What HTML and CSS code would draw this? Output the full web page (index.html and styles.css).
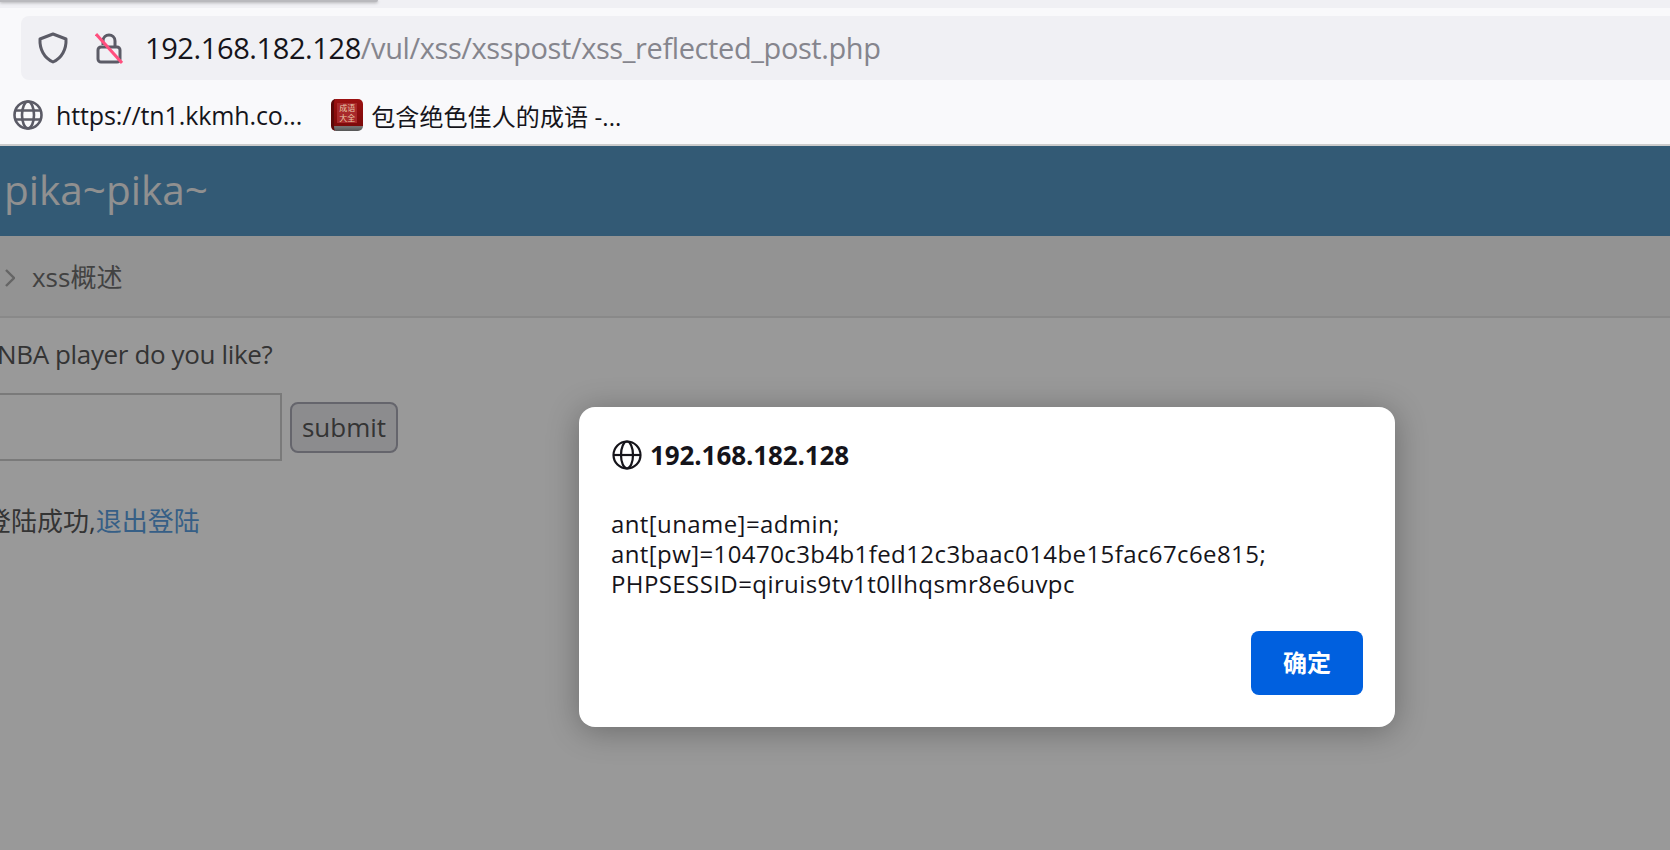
FILE: index.html
```html
<!DOCTYPE html>
<html lang="zh-CN">
<head>
  <meta charset="UTF-8" />
  <title>xss_reflected_post</title>
  <link rel="stylesheet" href="styles.css">
</head>
<body>
  <div class="tabstrip"><div class="tab-edge"></div></div>
  <div class="toolbar">
    <div class="urlbar">
      <svg class="shield" viewBox="0 0 30 32" fill="none" stroke="#5b5b66" stroke-width="3" stroke-linejoin="round">
        <path d="M15 2 L28 7 C28.500 17 24 26 15 30 C6 26 1.500 17 2 7 Z"/>
      </svg>
      <svg class="lock" viewBox="0 0 28 32" fill="none" stroke-width="3">
        <path d="M8 13 V9 C8 1 20 1 20 9 V15" stroke="#5b5b66"/>
        <rect x="3" y="15" width="22" height="15" rx="3" stroke="#5b5b66"/>
        <path d="M1 2 L27 31" stroke="#ff4f7e"/>
      </svg>
      <div class="url"><span class="host">192.168.182.128</span>/vul/xss/xsspost/xss_reflected_post.php</div>
    </div>
    <div class="bookmarks">
      <div class="bookmark">
        <svg class="globe" viewBox="0 0 30 30" fill="none" stroke="#5b5b66" stroke-width="2.600">
          <circle cx="15" cy="15" r="13.500"/>
          <ellipse cx="15" cy="15" rx="6" ry="13.500"/>
          <path d="M2 10.500 H28 M2 19.500 H28"/>
        </svg>
        <span>https://tn1.kkmh.co...</span>
      </div>
      <div class="bookmark bookmark-cn">
        <div class="book"><div class="book-label">成语<br>大全</div></div>
        <span>包含绝色佳人的成语 -...</span>
      </div>
    </div>
  </div>

  <div class="page">
    <div class="navbar">pika~pika~</div>
    <div class="breadcrumb">
      <svg class="chevron" viewBox="0 0 10 18" fill="none" stroke="#a8a8a8" stroke-width="2.400"><path d="M1 1 L9 9 L1 17"/></svg>
      <span>xss概述</span>
    </div>
    <div class="content">
      <p class="question">NBA player do you like?</p>
      <form class="nba-form">
        <input class="nba-input" type="text" />
        <button class="submit" type="button">submit</button>
      </form>
      <p class="login-msg">登陆成功,<a href="#">退出登陆</a></p>
    </div>

    <div class="overlay">
      <div class="dialog">
        <div class="dialog-title">
          <svg class="globe" viewBox="0 0 30 30" fill="none" stroke="#15141a" stroke-width="2.200">
            <circle cx="15" cy="15" r="13.500"/>
            <ellipse cx="15" cy="15" rx="6" ry="13.500"/>
            <path d="M2 15 H28"/>
          </svg>
          <span>192.168.182.128</span>
        </div>
        <div class="dialog-msg">ant[uname]=admin;<br>ant[pw]=10470c3b4b1fed12c3baac014be15fac67c6e815;<br>PHPSESSID=qiruis9tv1t0llhqsmr8e6uvpc</div>
        <div class="dialog-actions">
          <button class="ok" type="button">确定</button>
        </div>
      </div>
    </div>
  </div>
</body>
</html>
```

FILE: styles.css
```css
* {
  box-sizing: border-box;
}
html, body {
  height: 100%;
}
body {
  margin: 0;
  overflow: hidden;
  display: flex;
  flex-direction: column;
  background: #fff;
  font-family: "Open Sans", "Noto Sans CJK SC", sans-serif;
}

/* browser chrome */
.tabstrip {
  height: 8px;
  background: #f0f0f4;
}
.tab-edge {
  width: 378px;
  height: 2px;
  background: #b9b9bd;
  box-shadow: 0 1px 3px rgba(0, 0, 0, 0.3);
  border-bottom-right-radius: 4px;
}
.toolbar {
  background: #f9f9fb;
  border-bottom: 2px solid #ccc;
  height: 138px;
  padding-top: 8px;
}
.urlbar {
  display: flex;
  align-items: center;
  height: 64px;
  margin-left: 21px;
  padding-left: 17px;
  background: #f0f0f4;
  border-radius: 8px 0 0 8px;
}
.shield {
  width: 30px;
  height: 32px;
}
.lock {
  width: 28px;
  height: 32px;
  margin-left: 27px;
}
.url {
  margin: -2px 0 0 22px;
  font-size: 29px;
  letter-spacing: -0.4px;
  color: #85858d;
}
.host {
  color: #15141a;
}
.bookmarks {
  display: flex;
  align-items: center;
  height: 62px;
  padding: 8px 0 0 13px;
  gap: 29px;
}
.bookmark {
  display: flex;
  align-items: center;
  gap: 13px;
  font-size: 25px;
  letter-spacing: -0.1px;
  color: #15141a;
}
.bookmark-cn {
  gap: 8px;
  font-size: 24px;
  letter-spacing: 0.1px;
}
.bookmark .globe {
  width: 30px;
  height: 30px;
}
.book {
  width: 32px;
  height: 32px;
  padding-top: 4px;
  border-radius: 5px;
  background: linear-gradient(#9c1111, #7c0a0a 85%, #777 86%, #555);
  border-left: 3px solid #5c0808;
}
.book-label {
  width: 20px;
  margin-left: 3px;
  font-size: 8px;
  line-height: 10px;
  letter-spacing: 0;
  text-align: center;
  color: #e9c9a8;
  background: #a8282a;
}

/* page behind the alert */
.page {
  position: relative;
  flex: 1;
  background: #fff;
}
.navbar {
  height: 90px;
  padding: 18px 0 0 4px;
  background: #5596c3;
  color: #f0f0f0;
  font-size: 40.5px;
  line-height: 52px;
}
.breadcrumb {
  display: flex;
  align-items: center;
  gap: 17px;
  height: 82px;
  padding-left: 5px;
  background: #f5f5f5;
  border-bottom: 2px solid #e4e4e4;
  font-size: 26px;
  color: #6e6e6e;
}
.chevron {
  width: 10px;
  height: 18px;
  margin-top: 3px;
}
.content {
  padding-top: 18px;
  color: #585858;
  font-size: 26px;
}
.question {
  margin: 0 0 21px -3px;
  line-height: 36px;
  letter-spacing: -0.37px;
}
.nba-form {
  display: flex;
  align-items: center;
  gap: 8px;
}
.nba-input {
  width: 282px;
  height: 68px;
  border: 2px solid #ccc;
  border-left: none;
  background: #fff;
}
.submit {
  width: 108px;
  height: 51px;
  border: 2px solid #a8a8b4;
  border-radius: 8px;
  background: #e9e9ed;
  color: #585858;
  font: inherit;
  padding: 0;
}
.login-msg {
  margin: 42px 0 0 -15px;
  line-height: 36px;
}
.login-msg a {
  color: #5a9fe0;
  text-decoration: none;
}

/* alert */
.overlay {
  position: absolute;
  inset: 0;
  padding: 261px 0 0 579px;
  background: rgba(0, 0, 0, 0.4);
}
.dialog {
  width: 816px;
  height: 320px;
  padding: 33px 32px 32px;
  background: #fff;
  border-radius: 16px;
  box-shadow: 0 4px 32px rgba(0, 0, 0, 0.3);
  color: #15141a;
}
.dialog-title {
  display: flex;
  align-items: center;
  gap: 8px;
  height: 30px;
  font-size: 26px;
  font-weight: 700;
  letter-spacing: -0.1px;
}
.dialog-title .globe {
  width: 30px;
  height: 30px;
  margin-left: 1px;
}
.dialog-msg {
  margin-top: 39px;
  font-size: 24px;
  letter-spacing: 0.41px;
  line-height: 30px;
}
.dialog-actions {
  display: flex;
  justify-content: flex-end;
  margin-top: 32px;
}
.ok {
  width: 112px;
  height: 64px;
  padding: 0 0 3px;
  border: none;
  border-radius: 8px;
  background: #0060df;
  color: #fff;
  font: 700 24px "Noto Sans CJK SC", sans-serif;
}
```
